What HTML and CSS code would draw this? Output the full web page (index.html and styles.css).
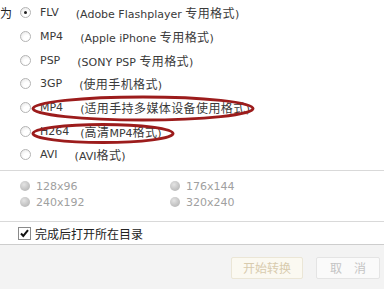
FILE: index.html
```html
<!DOCTYPE html>
<html>
<head>
<meta charset="utf-8">
<link rel="stylesheet" href="styles.css">
</head>
<body>
<div class="page">
  <div class="formats">
    <div class="row"><span class="lead">为</span><span class="radio checked"></span><span class="name">FLV</span><span class="desc">(Adobe Flashplayer <span class="zh">专用格式</span>)</span></div>
    <div class="row"><span class="lead"></span><span class="radio"></span><span class="name">MP4</span><span class="desc">(Apple iPhone <span class="zh">专用格式</span>)</span></div>
    <div class="row"><span class="lead"></span><span class="radio"></span><span class="name">PSP</span><span class="desc">(SONY PSP <span class="zh">专用格式</span>)</span></div>
    <div class="row"><span class="lead"></span><span class="radio"></span><span class="name">3GP</span><span class="desc">(<span class="zh">使用手机格式</span>)</span></div>
    <div class="row"><span class="lead"></span><span class="radio"></span><span class="name">MP4</span><span class="desc">(<span class="zh">适用手持多媒体设备使用格式</span>)</span></div>
    <div class="row"><span class="lead"></span><span class="radio"></span><span class="name">H264</span><span class="desc narrow">(<span class="zh">高清</span>MP4<span class="zh">格式</span>)</span></div>
    <div class="row"><span class="lead"></span><span class="radio"></span><span class="name">AVI</span><span class="desc">(AVI<span class="zh">格式</span>)</span></div>
  </div>
  <div class="sizes">
    <div class="size"><span class="dot"></span><span>128x96</span></div>
    <div class="size"><span class="dot"></span><span>176x144</span></div>
    <div class="size"><span class="dot"></span><span>240x192</span></div>
    <div class="size"><span class="dot"></span><span>320x240</span></div>
  </div>
  <div class="opts">
    <span class="check"><svg width="11" height="11" viewBox="0 0 11 11"><path d="M2 5.5 L4.3 8 L9 2.2" fill="none" stroke="#111" stroke-width="2"/></svg></span>
    <span class="zh">完成后打开所在目录</span>
  </div>
  <div class="footer">
    <span class="btn start zh">开始转换</span>
    <span class="btn cancel zh">取　消</span>
  </div>
  <svg class="marks" width="384" height="289" viewBox="0 0 384 289">
    <ellipse cx="143" cy="108.5" rx="110" ry="11.5" fill="none" stroke="#9c1c1c" stroke-width="3"/>
    <ellipse cx="103" cy="133.5" rx="70" ry="9" fill="none" stroke="#9c1c1c" stroke-width="3"/>
  </svg>
</div>
</body>
</html>
```
FILE: styles.css
```css
html, body {
  margin: 0;
  padding: 0;
  background: #fff;
}
.page {
  position: relative;
  width: 384px;
  height: 289px;
  overflow: hidden;
  font-family: "DejaVu Sans", "Noto Sans CJK SC", sans-serif;
  font-size: 11px;
  color: #3a3a3a;
}
.zh {
  font-family: "Noto Sans CJK SC", sans-serif;
  font-size: 12px;
}
.desc .zh {
  letter-spacing: 0.4px;
}
.formats {
  height: 169px;
  padding-top: 1px;
  border-bottom: 1px solid #d9d9d9;
}
.row {
  display: flex;
  align-items: center;
  height: 23.67px;
}
.lead {
  width: 20px;
  font-family: "Noto Sans CJK SC", sans-serif;
  font-size: 12px;
  color: #222;
}
.radio {
  width: 9px;
  height: 9px;
  border-radius: 50%;
  border: 1px solid #b4b4b4;
  background: radial-gradient(circle at 65% 70%, #ffffff 35%, #e2e2e2 100%);
  position: relative;
  flex: none;
}
.radio.checked::after {
  content: "";
  position: absolute;
  left: 3px;
  top: 3px;
  width: 3px;
  height: 3px;
  border-radius: 50%;
  background: #222;
}
.name {
  margin-left: 9px;
}
.desc {
  margin-left: 17px;
}
.desc.narrow {
  margin-left: 11px;
}
.sizes {
  display: grid;
  grid-template-columns: 150px 1fr;
  grid-auto-rows: 16px;
  padding: 7px 0 0 20px;
  height: 43px;
  border-bottom: 1px solid #d9d9d9;
  color: #a0a0a0;
}
.size {
  display: flex;
  align-items: center;
}
.dot {
  width: 10px;
  height: 10px;
  border-radius: 50%;
  background: radial-gradient(circle at 40% 35%, #e4e4e4 0%, #c2c2c2 60%, #b0b0b0 100%);
  margin-right: 6px;
  flex: none;
}
.opts {
  display: flex;
  align-items: center;
  height: 22px;
  padding-left: 18px;
  border-bottom: 1px solid #cdcdcd;
  color: #222;
}
.check {
  width: 11px;
  height: 11px;
  border: 1px solid #8a8a8a;
  background: #fff;
  margin-right: 4px;
  display: flex;
}
.footer {
  height: 44px;
  background: #f3f3f3;
  display: flex;
  justify-content: flex-end;
  align-items: flex-start;
  padding-top: 12px;
  padding-right: 4px;
  box-sizing: border-box;
  gap: 13px;
}
.btn {
  height: 20px;
  line-height: 20px;
  text-align: center;
  border: 1px solid #e4e4e4;
  border-radius: 2px;
  background: #fafafa;
  color: #c4c4c4;
}
.btn.start {
  width: 70px;
  background: #fbf9f1;
  border-color: #ebe6d6;
  color: #d8cbae;
}
.btn.cancel {
  width: 62px;
}
.marks {
  position: absolute;
  left: 0;
  top: 0;
  pointer-events: none;
}
```
